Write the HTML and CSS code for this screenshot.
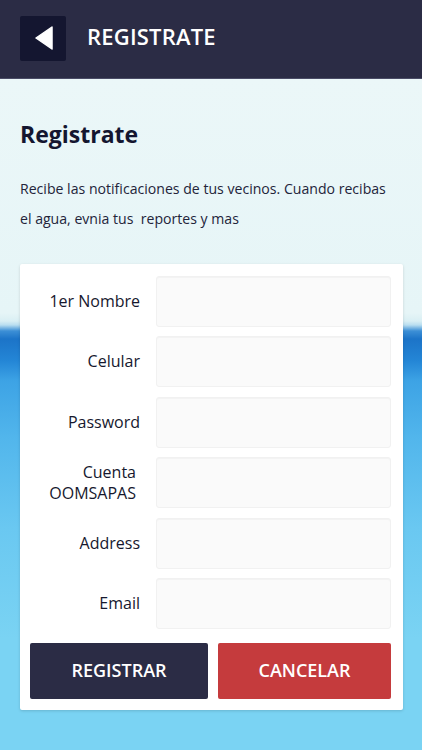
FILE: index.html
```html
<!DOCTYPE html>
<html lang="es">
<head>
    <meta charset="UTF-8">
    <meta name="viewport" content="width=device-width, initial-scale=1.0">
    <title>Registrate</title>
    <link rel="stylesheet" href="styles.css">
</head>
<body>

    <div id="top-bar">
        <button class="back-button" aria-label="Regresar">
            <svg width="18" height="24" viewBox="0 0 18 24">
                <path d="M17 1 L1 12 L17 23 Z" fill="#fff" stroke="#fff" stroke-width="1.5" stroke-linejoin="round"/>
            </svg>
        </button>
        <span class="bar-title">REGISTRATE</span>
    </div>

    <div id="page">
        <h1>Registrate</h1>
        <p class="intro">Recibe las notificaciones de tus vecinos. Cuando recibas el agua, evnia tus&nbsp; reportes y mas</p>

        <form id="register-card" onsubmit="return false;">
            <div class="field">
                <label for="nombre">1er Nombre</label>
                <input type="text" id="nombre">
            </div>
            <div class="field">
                <label for="celular">Celular</label>
                <input type="tel" id="celular">
            </div>
            <div class="field">
                <label for="password">Password</label>
                <input type="password" id="password">
            </div>
            <div class="field">
                <label for="cuenta" class="narrow">Cuenta OOMSAPAS</label>
                <input type="text" id="cuenta">
            </div>
            <div class="field">
                <label for="address">Address</label>
                <input type="text" id="address">
            </div>
            <div class="field">
                <label for="email">Email</label>
                <input type="email" id="email">
            </div>

            <div class="actions">
                <button type="submit" class="btn btn-primary">REGISTRAR</button>
                <button type="button" class="btn btn-danger">CANCELAR</button>
            </div>
        </form>
    </div>

</body>
</html>
```

FILE: styles.css
```css
body {
    margin: 0;
    padding: 0;
    font-family: 'Open Sans', 'Noto Sans', sans-serif;
    color: #16182e;
    height: 750px;
    overflow: hidden;
    background-color: #7ad3f3;
}

#top-bar {
    height: 78px;
    background-color: #2b2c45;
    border-bottom: 1px solid #4a4c66;
    display: flex;
    align-items: center;
    padding: 0 20px;
    gap: 21px;
}

.back-button {
    width: 46px;
    height: 45px;
    margin-top: -2px;
    background-color: #141630;
    border: none;
    border-radius: 2px;
    padding: 0 0 0 2px;
    display: flex;
    align-items: center;
    justify-content: center;
    cursor: pointer;
}

.bar-title {
    color: #fff;
    font-size: 22px;
    font-weight: 600;
    margin-top: -6px;
    letter-spacing: 0.2px;
}

#page {
    height: 671px;
    padding: 0 19px 0 20px;
    overflow: hidden;
    background:
        linear-gradient(to bottom,
            #ebf7f8 0px,
            #e6f5f7 234px,
            #d9eff4 242px,
            #b9def0 246px,
            #3c8fd6 252px,
            #1c74c8 260px,
            #2486d6 282px,
            #3da3e5 302px,
            #52b6ec 360px,
            #6ac8f1 450px,
            #7ad3f3 560px,
            #7ad3f3 100%);
}

h1 {
    margin: 0;
    padding-top: 39px;
    font-size: 23px;
    font-weight: 700;
    line-height: 32px;
    color: #141630;
}

.intro {
    margin: 24px 0 0;
    font-size: 14.1px;
    line-height: 30px;
    color: #23243a;
    width: 372px;
}

#register-card {
    margin-top: 30px;
    width: 383px;
    box-sizing: border-box;
    background-color: #fff;
    padding: 12px 12px 11px 10px;
    border-radius: 2px;
    box-shadow: 0 1px 3px rgba(0, 0, 0, 0.15);
    display: flex;
    flex-direction: column;
    gap: 9.4px;
}

.field {
    display: flex;
    align-items: center;
    gap: 16px;
}

.field label {
    width: 110px;
    text-align: right;
    font-size: 16px;
    font-weight: 500;
    line-height: 21px;
    color: #16182e;
}

.field label.narrow {
    padding-right: 4px;
    width: 106px;
}

.field input {
    width: 235px;
    height: 51px;
    box-sizing: border-box;
    border: 1px solid #f1f1f1;
    border-radius: 3px;
    background-color: #fafafa;
    box-shadow: inset 0 1px 1px rgba(0, 0, 0, 0.03);
    outline: none;
}

.actions {
    display: flex;
    gap: 10px;
    margin-top: 4.6px;
}

.btn {
    height: 56px;
    border: none;
    border-radius: 2px;
    color: #fff;
    font-family: 'Open Sans', 'Noto Sans', sans-serif;
    font-size: 18px;
    font-weight: 600;
    cursor: pointer;
    padding: 0 0 2px;
}

.btn-primary {
    width: 178px;
    background-color: #2b2c45;
}

.btn-danger {
    width: 173px;
    background-color: #c53b3d;
}
```
